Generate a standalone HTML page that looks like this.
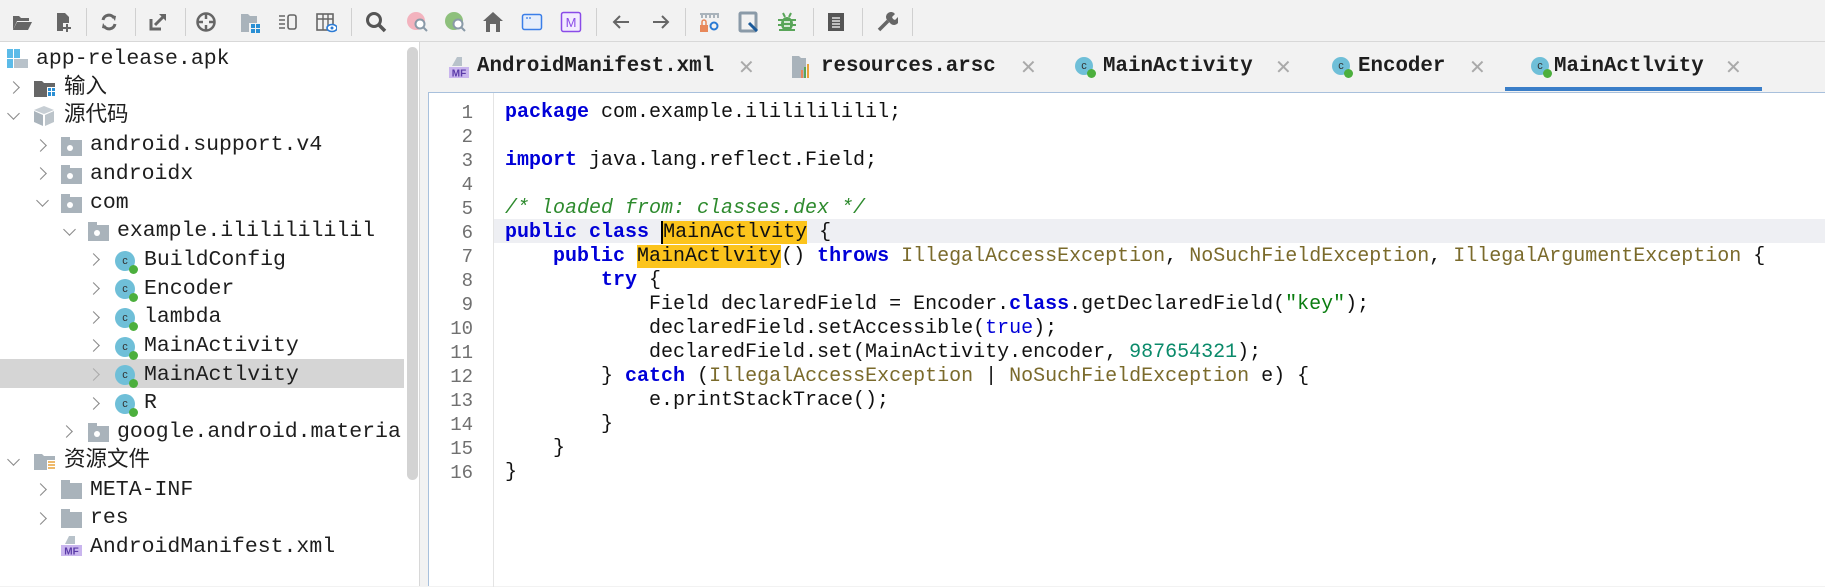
<!DOCTYPE html>
<html><head><meta charset="utf-8"><style>
*{margin:0;padding:0;box-sizing:border-box}
body{width:1825px;height:586px;overflow:hidden;background:#f2f2f2;position:relative;font-family:"Liberation Mono","Noto Sans CJK SC",monospace}
.ab{position:absolute}
.sep{position:absolute;top:8px;width:1px;height:28px;background:#d0d0d0}
.ic{position:absolute;top:11px;width:22px;height:22px}
#tree{position:absolute;left:0;top:42px;width:420px;height:544px;background:#fff}
.row{position:absolute;height:29px;font-size:21.5px;color:#1e1e1e;line-height:29px;white-space:pre}
.chev{position:absolute;width:9px;height:9px;border-right:1.5px solid #888;border-bottom:1.5px solid #888}
.cr{transform:rotate(-45deg)}.cd{transform:rotate(45deg)}
.fold{position:absolute;width:21px;height:16px;background:#a9b3bb}
.fold:before{content:"";position:absolute;left:0;top:-3px;width:9px;height:4px;background:#a9b3bb}
.fold i{position:absolute;left:6px;top:5px;width:6px;height:6px;border-radius:50%;background:#fff}
.cls{position:absolute;width:20px;height:20px;border-radius:50%;background:#6fbfd8;font:11px "Liberation Sans";color:#333;text-align:center;line-height:20px}
.cls:after{content:"";position:absolute;right:-3px;bottom:-3px;width:9px;height:9px;border-radius:50%;background:#4caf3d}
#ed{position:absolute;left:428px;top:92px;width:1397px;height:494px;background:#fff;border-top:1px solid #a8c0dc;border-left:1px solid #a8c0dc}
.ln{position:absolute;left:0;width:44px;text-align:right;font-size:19px;color:#707070;line-height:24px}
.cl{position:absolute;left:76px;font-size:20px;white-space:pre;color:#111;line-height:24px}
.k{color:#0000d8;font-weight:bold}
.t{color:#7a6a2b}
.c{color:#2d8a2d;font-style:italic}
.s{color:#0a7d10}
.n{color:#0a8a6a}
.y{background:#fcc41c}
.tab{position:absolute;top:55px;font-size:20.8px;font-weight:bold;color:#1e1e1e;white-space:pre}
.x{position:absolute;top:55px;font:20px "Liberation Sans";color:#aaa}
</style></head><body>
<!-- toolbar -->
<div class="ab" style="left:0;top:41px;width:1825px;height:1px;background:#d8d8d8"></div>
<svg class="ic" style="left:11px" viewBox="0 0 22 22"><path d="M2 5h6l2 2h8v3H6l-4 9z" fill="#666"/><path d="M6 11h15l-4 8H2z" fill="#666"/></svg>
<svg class="ic" style="left:52px" viewBox="0 0 22 22"><path d="M5 2h8l4 4v6h-6v8H5z" fill="#666"/><path d="M14 13h2v3h3v2h-3v3h-2v-3h-3v-2h3z" fill="#666"/></svg>
<div class="sep" style="left:86px"></div>
<svg class="ic" style="left:98px" viewBox="0 0 22 22"><path d="M5 9a6 6 0 0 1 11-2M17 13a6 6 0 0 1-11 2" stroke="#666" stroke-width="3" fill="none"/><path d="M13 4l5 1-1 5z M9 18l-5-1 1-5z" fill="#666"/></svg>
<div class="sep" style="left:135px"></div>
<svg class="ic" style="left:147px" viewBox="0 0 22 22"><path d="M4 8v10h10" stroke="#666" stroke-width="3" fill="none"/><path d="M8 14l9-9" stroke="#666" stroke-width="3"/><path d="M12 3h7v7z" fill="#666"/></svg>
<div class="sep" style="left:185px"></div>
<svg class="ic" style="left:195px" viewBox="0 0 22 22"><circle cx="11" cy="11" r="8.5" stroke="#666" stroke-width="2.5" fill="none"/><path d="M11 2v6M11 14v6M2 11h6M14 11h6" stroke="#666" stroke-width="2.5"/></svg>
<svg class="ic" style="left:239px" viewBox="0 0 22 22"><path d="M2 3h7l2 2h7v7H10v9H2z" fill="#a9b3bb"/><rect x="12" y="13" width="4" height="4" fill="#2a8fd4"/><rect x="17" y="13" width="4" height="4" fill="#2a8fd4"/><rect x="12" y="18" width="4" height="4" fill="#2a8fd4"/><rect x="17" y="18" width="4" height="4" fill="#2a8fd4"/></svg>
<svg class="ic" style="left:277px" viewBox="0 0 22 22"><path d="M2 5h6M2 9h6M2 13h6M2 17h6" stroke="#666" stroke-width="1.5"/><rect x="11" y="4" width="8" height="14" rx="2" stroke="#666" stroke-width="1.6" fill="none"/></svg>
<svg class="ic" style="left:315px" viewBox="0 0 22 22"><rect x="2" y="3" width="16" height="16" stroke="#666" stroke-width="1.6" fill="none"/><path d="M2 8h16M8 3v16M13 3v16" stroke="#666" stroke-width="1.4"/><ellipse cx="17" cy="17" rx="5" ry="3.5" fill="#fff" stroke="#2a7ad4" stroke-width="1.6"/><circle cx="17" cy="17" r="1.5" fill="#2a7ad4"/></svg>
<div class="sep" style="left:351px"></div>
<svg class="ic" style="left:365px" viewBox="0 0 22 22"><circle cx="9" cy="9" r="6.5" stroke="#555" stroke-width="3" fill="none"/><path d="M14 14l6 6" stroke="#555" stroke-width="3.5"/></svg>
<svg class="ic" style="left:407px" viewBox="0 0 22 22"><circle cx="9" cy="10" r="9" fill="#f3b3be"/><circle cx="13" cy="13" r="4.5" stroke="#8a9aa8" stroke-width="2" fill="#fff"/><path d="M16 16l4 4" stroke="#8a9aa8" stroke-width="2"/></svg>
<svg class="ic" style="left:445px" viewBox="0 0 22 22"><circle cx="9" cy="10" r="9" fill="#8ec07c"/><circle cx="13" cy="13" r="4.5" stroke="#8a9aa8" stroke-width="2" fill="#fff"/><path d="M16 16l4 4" stroke="#8a9aa8" stroke-width="2"/></svg>
<svg class="ic" style="left:482px" viewBox="0 0 22 22"><path d="M11 1l10 9h-3v11H4V10H1z" fill="#666"/><rect x="8" y="13" width="6" height="8" fill="#f2f2f2"/></svg>
<svg class="ic" style="left:521px" viewBox="0 0 22 22"><rect x="1.5" y="3.5" width="19" height="15" rx="2" fill="#e6eefb" stroke="#3a7ee8" stroke-width="1.5"/><path d="M5 7h2M8 7h2" stroke="#3a7ee8" stroke-width="1.2"/></svg>
<svg class="ic" style="left:560px" viewBox="0 0 22 22"><rect x="1.5" y="1.5" width="19" height="19" rx="2" fill="#f3ecff" stroke="#8a4be8" stroke-width="1.5"/><text x="11" y="16" font-family="Liberation Sans" font-size="13" fill="#8a4be8" text-anchor="middle">M</text></svg>
<div class="sep" style="left:596px"></div>
<svg class="ic" style="left:610px" viewBox="0 0 22 22"><path d="M19 11H4M10 5l-6 6 6 6" stroke="#666" stroke-width="2" fill="none"/></svg>
<svg class="ic" style="left:650px" viewBox="0 0 22 22"><path d="M3 11h15M12 5l6 6-6 6" stroke="#666" stroke-width="2" fill="none"/></svg>
<div class="sep" style="left:685px"></div>
<svg class="ic" style="left:698px" viewBox="0 0 22 22"><path d="M2 3h19M4 3v4M8 3v4M12 3v4M16 3v4M20 3v4" stroke="#a9b3bb" stroke-width="2"/><rect x="2" y="14" width="8" height="7" fill="#e8885a"/><path d="M4 14v-3a2 2 0 0 1 4 0v3" stroke="#e8885a" stroke-width="1.5" fill="none"/><circle cx="16" cy="15" r="3.5" stroke="#2a7ad4" stroke-width="2" fill="none"/></svg>
<svg class="ic" style="left:737px" viewBox="0 0 22 22"><rect x="3" y="2" width="16" height="18" rx="1" stroke="#8a9aa8" stroke-width="3" fill="none"/><path d="M12 12l8 8" stroke="#1a5a9a" stroke-width="3"/></svg>
<svg class="ic" style="left:776px" viewBox="0 0 22 22"><ellipse cx="11" cy="13" rx="6" ry="7" fill="#59a559"/><path d="M2 9h18M2 14h18M3 19h16M7 2l2 4M15 2l-2 4" stroke="#59a559" stroke-width="2"/><path d="M8 11h6M8 15h6" stroke="#fff" stroke-width="1.5"/></svg>
<div class="sep" style="left:813px"></div>
<svg class="ic" style="left:825px" viewBox="0 0 22 22"><rect x="3" y="2" width="16" height="18" fill="#555"/><path d="M7 7h8M7 10h8M7 13h8M7 16h8" stroke="#fff" stroke-width="1.3"/></svg>
<div class="sep" style="left:862px"></div>
<svg class="ic" style="left:876px" viewBox="0 0 22 22"><path d="M3 19l9-9" stroke="#666" stroke-width="3.5"/><path d="M11 9a5 5 0 0 1 8-6l-3 3 1 2 2 1 3-3a5 5 0 0 1-7 7z" fill="#666"/></svg>
<div class="sep" style="left:912px"></div>

<!-- tree -->
<div id="tree">
<div class="ab" style="left:0;top:317px;width:404px;height:29px;background:#d5d5d5"></div>
<div class="ab" style="left:407px;top:5px;width:11px;height:433px;border-radius:6px;background:#d3d3d3"></div>
<div class="ab" style="left:419px;top:0;width:1px;height:544px;background:#d8d8d8"></div>
</div>
<div class="ab" style="left:420px;top:42px;width:8px;height:544px;background:#f2f2f2"></div>
<div id="rows">
<svg class="ab" style="left:7px;top:49px" width="22" height="20" viewBox="0 0 22 20"><rect x="0" y="0" width="6" height="9" fill="#5cbbe8"/><rect x="7" y="0" width="6" height="9" fill="#5cbbe8"/><rect x="0" y="10" width="6" height="9" fill="#5cbbe8"/><rect x="7" y="10" width="14" height="9" fill="#b8c2ca"/></svg>
<div class="row" style="left:36px;top:45px">app-release.apk</div>
<div class="chev cr" style="left:9px;top:83px"></div>
<svg class="ab" style="left:34px;top:79px" width="22" height="19"><path d="M0 2h8l2 2h11v4h-8v10H0z" fill="#666"/><rect x="14" y="9" width="3" height="3" fill="#2a8fd4"/><rect x="18" y="9" width="3" height="3" fill="#2a8fd4"/><rect x="14" y="13" width="3" height="4" fill="#2a8fd4"/><rect x="18" y="13" width="3" height="4" fill="#2a8fd4"/></svg>
<div class="row" style="left:64px;top:74px">输入</div>
<div class="chev cd" style="left:9px;top:109px"></div>
<svg class="ab" style="left:34px;top:106px" width="21" height="20"><path d="M10 0l10 4-10 4L0 4z" fill="#c7ced4"/><path d="M0 5l9 4v11L0 16z" fill="#aab4bc"/><path d="M20 5l-9 4v11l9-4z" fill="#bcc4ca"/></svg>
<div class="row" style="left:64px;top:102px">源代码</div>

<div class="chev cr" style="left:36px;top:141px"></div><div class="fold" style="left:61px;top:140px"><i></i></div><div class="row" style="left:90px;top:131px">android.support.v4</div>
<div class="chev cr" style="left:36px;top:169px"></div><div class="fold" style="left:61px;top:168px"><i></i></div><div class="row" style="left:90px;top:160px">androidx</div>
<div class="chev cd" style="left:38px;top:196px"></div><div class="fold" style="left:61px;top:197px"><i></i></div><div class="row" style="left:90px;top:189px">com</div>
<div class="chev cd" style="left:65px;top:225px"></div><div class="fold" style="left:88px;top:225px"><i></i></div><div class="row" style="left:117px;top:217px">example.ilililililil</div>

<div class="chev cr" style="left:89px;top:255px"></div><div class="cls" style="left:115px;top:251px">c</div><div class="row" style="left:144px;top:246px">BuildConfig</div>
<div class="chev cr" style="left:89px;top:284px"></div><div class="cls" style="left:115px;top:279px">c</div><div class="row" style="left:144px;top:275px">Encoder</div>
<div class="chev cr" style="left:89px;top:313px"></div><div class="cls" style="left:115px;top:308px">c</div><div class="row" style="left:144px;top:303px">lambda</div>
<div class="chev cr" style="left:89px;top:341px"></div><div class="cls" style="left:115px;top:337px">c</div><div class="row" style="left:144px;top:332px">MainActivity</div>
<div class="chev cr" style="left:89px;top:370px;border-color:#aaa"></div><div class="cls" style="left:115px;top:365px">c</div><div class="row" style="left:144px;top:361px">MainActlvity</div>
<div class="chev cr" style="left:89px;top:399px"></div><div class="cls" style="left:115px;top:394px">c</div><div class="row" style="left:144px;top:389px">R</div>
<div class="chev cr" style="left:62px;top:427px"></div><div class="fold" style="left:88px;top:426px"><i></i></div><div class="row" style="left:117px;top:418px">google.android.materia</div>

<div class="chev cd" style="left:9px;top:455px"></div>
<svg class="ab" style="left:34px;top:452px" width="22" height="19"><path d="M0 2h8l2 2h11v4h-8v10H0z" fill="#a9b3bb"/><path d="M14 10h7M14 13h7M14 16h7" stroke="#e8a23a" stroke-width="1.6"/></svg>
<div class="row" style="left:64px;top:447px">资源文件</div>
<div class="chev cr" style="left:36px;top:485px"></div><div class="fold" style="left:61px;top:483px;"></div><div class="row" style="left:90px;top:476px">META-INF</div>
<div class="chev cr" style="left:36px;top:514px"></div><div class="fold" style="left:61px;top:512px"></div><div class="row" style="left:90px;top:504px">res</div>
<svg class="ab" style="left:61px;top:536px" width="22" height="20"><path d="M8 0h6v8H4z" fill="#b8c2ca"/><rect x="0" y="9" width="21" height="11" fill="#c9b5ee"/><text x="10.5" y="18.5" font-family="Liberation Sans" font-size="10" fill="#5a3aa8" text-anchor="middle" font-weight="bold">MF</text></svg>
<div class="row" style="left:90px;top:533px">AndroidManifest.xml</div>
</div>

<!-- tabs -->
<svg class="ab" style="left:449px;top:57px" width="20" height="22"><path d="M8 0h5v9H3z" fill="#b8c2ca"/><rect x="0" y="10" width="20" height="11" fill="#c9b5ee"/><text x="10" y="19.5" font-family="Liberation Sans" font-size="10" fill="#5a3aa8" text-anchor="middle" font-weight="bold">MF</text></svg>
<div class="tab" style="left:477px">AndroidManifest.xml</div><div class="x" style="left:738px">✕</div>
<svg class="ab" style="left:792px;top:56px" width="20" height="22"><path d="M0 0h7l2 2h5v20H0z" fill="#a9b3bb"/><rect x="9" y="14" width="2" height="8" fill="#e8885a"/><rect x="12" y="11" width="2" height="11" fill="#59a559"/><rect x="15" y="8" width="2" height="14" fill="#e8a23a"/></svg>
<div class="tab" style="left:821px">resources.arsc</div><div class="x" style="left:1020px">✕</div>
<div class="cls" style="left:1075px;top:57px;width:18px;height:18px;line-height:18px">c</div><div class="tab" style="left:1103px">MainActivity</div><div class="x" style="left:1275px">✕</div>
<div class="cls" style="left:1332px;top:57px;width:18px;height:18px;line-height:18px">c</div><div class="tab" style="left:1358px">Encoder</div><div class="x" style="left:1469px">✕</div>
<div class="cls" style="left:1531px;top:57px;width:18px;height:18px;line-height:18px">c</div><div class="tab" style="left:1554px">MainActlvity</div><div class="x" style="left:1725px">✕</div>
<div class="ab" style="left:1505px;top:87px;width:257px;height:4px;background:#3a7ec8"></div>

<!-- editor -->
<div id="ed">
<div class="ab" style="left:64px;top:0;width:1px;height:494px;background:#e4e4e4"></div>
<div class="ab" style="left:65px;top:126px;width:1331px;height:24px;background:#eeeff3"></div>
<div class="ln" style="top:8px">1</div><div class="ln" style="top:32px">2</div><div class="ln" style="top:56px">3</div><div class="ln" style="top:80px">4</div><div class="ln" style="top:104px">5</div><div class="ln" style="top:128px">6</div><div class="ln" style="top:152px">7</div><div class="ln" style="top:176px">8</div><div class="ln" style="top:200px">9</div><div class="ln" style="top:224px">10</div><div class="ln" style="top:248px">11</div><div class="ln" style="top:272px">12</div><div class="ln" style="top:296px">13</div><div class="ln" style="top:320px">14</div><div class="ln" style="top:344px">15</div><div class="ln" style="top:368px">16</div>
<div class="cl" style="top:8px"><span class="k">package</span> com.example.ilililililil;</div>
<div class="cl" style="top:56px"><span class="k">import</span> java.lang.reflect.Field;</div>
<div class="cl" style="top:104px"><span class="c">/* loaded from: classes.dex */</span></div>
<div class="cl" style="top:128px"><span class="k">public</span> <span class="k">class</span> <span class="y" style="border-left:2px solid #000">MainActlvity</span> {</div>
<div class="cl" style="top:152px">    <span class="k">public</span> <span class="y">MainActlvity</span>() <span class="k">throws</span> <span class="t">IllegalAccessException</span>, <span class="t">NoSuchFieldException</span>, <span class="t">IllegalArgumentException</span> {</div>
<div class="cl" style="top:176px">        <span class="k">try</span> {</div>
<div class="cl" style="top:200px">            Field declaredField = Encoder.<span class="k">class</span>.getDeclaredField(<span class="s">"key"</span>);</div>
<div class="cl" style="top:224px">            declaredField.setAccessible(<span class="k" style="font-weight:normal">true</span>);</div>
<div class="cl" style="top:248px">            declaredField.set(MainActivity.encoder, <span class="n">987654321</span>);</div>
<div class="cl" style="top:272px">        } <span class="k">catch</span> (<span class="t">IllegalAccessException</span> | <span class="t">NoSuchFieldException</span> e) {</div>
<div class="cl" style="top:296px">            e.printStackTrace();</div>
<div class="cl" style="top:320px">        }</div>
<div class="cl" style="top:344px">    }</div>
<div class="cl" style="top:368px">}</div>
</div>
</body></html>
